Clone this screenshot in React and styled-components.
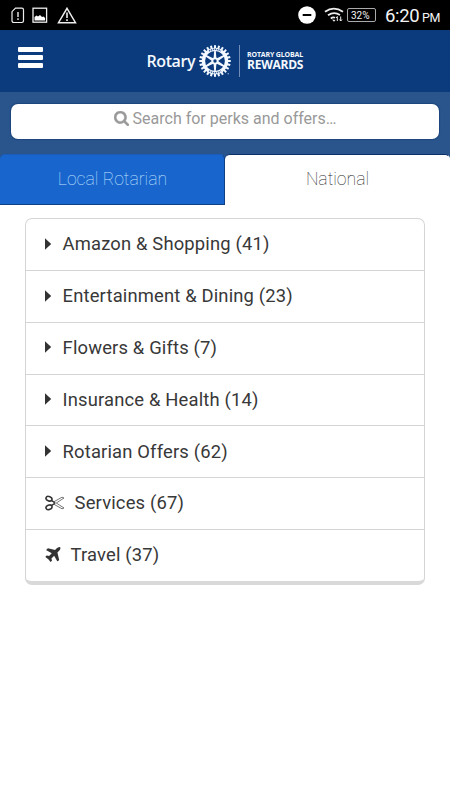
import styled, { createGlobalStyle } from 'styled-components';

const categories = [
  { name: 'Amazon & Shopping', count: 41, icon: 'caret' },
  { name: 'Entertainment & Dining', count: 23, icon: 'caret' },
  { name: 'Flowers & Gifts', count: 7, icon: 'caret' },
  { name: 'Insurance & Health', count: 14, icon: 'caret' },
  { name: 'Rotarian Offers', count: 62, icon: 'caret' },
  { name: 'Services', count: 67, icon: 'scissors' },
  { name: 'Travel', count: 37, icon: 'plane' },
];

const SimIcon = () => (
  <svg width="14" height="17" viewBox="0 0 14 17" fill="none" stroke="#eee">
    <path
      d="M4.5 1.2h6.3a1.7 1.7 0 0 1 1.7 1.7v10.9a1.7 1.7 0 0 1-1.7 1.7H2.7A1.7 1.7 0 0 1 1 13.8V4.7z"
      strokeWidth="1.2"
    />
    <path d="M7 5v5M7 11.3v1.7" strokeWidth="1.4" />
  </svg>
);

const PictureIcon = () => (
  <svg width="16" height="17" viewBox="0 0 16 17">
    <rect x="1" y="1.2" width="13.6" height="14" fill="none" stroke="#eee" strokeWidth="1.3" />
    <path d="M2.5 13.5V10l2-1.5 1.5 1 2-1.5 2 2 1.5-.5 1.6 1.5v2.5z" fill="#fff" />
  </svg>
);

const WarningIcon = () => (
  <svg width="20" height="17" viewBox="0 0 20 17" fill="none" stroke="#eee">
    <path d="M10 1.3 18.5 15.7h-17z" strokeWidth="1.5" />
    <path d="M10 5.5V11M10 12.3V14" strokeWidth="1.6" />
  </svg>
);

const DoNotDisturbIcon = () => (
  <svg width="18" height="18" viewBox="0 0 18 18">
    <circle cx="9" cy="9" r="8.8" fill="#fff" />
    <rect x="4.7" y="8" width="8.6" height="2" fill="#000" />
  </svg>
);

const WifiIcon = () => (
  <svg width="20" height="16" viewBox="0 0 20 16" fill="none" stroke="#eee">
    <path d="M1 4.8Q9.8-1.7 19 4.8" strokeWidth="1.8" />
    <path d="M4 8.3q6-4.2 12-.3" strokeWidth="1.8" />
    <path d="M6.8 11.5q2.2-1.7 4.2-.7" strokeWidth="1.8" />
    <path d="m8 12.5 2 2.3 1.5-1.8z" fill="#eee" stroke="none" />
    <path d="M13.3 14V9.5m-1.3 1.5 1.3-1.5M16.7 9.5V14m-1.3-1.5 1.3 1.5 1.3-1.5" />
  </svg>
);

const SearchIcon = () => (
  <svg width="15" height="15" viewBox="64 128 1664 1664" fill="#999" stroke="#999" strokeWidth="40">
    <path d="M1216 832q0-185-131.5-316.5t-316.5-131.5-316.5 131.5-131.5 316.5 131.5 316.5 316.5 131.5 316.5-131.5 131.5-316.5zm512 832q0 52-38 90t-90 38q-54 0-90-38l-343-342q-179 124-399 124-143 0-273.5-55.5t-225-150-150-225-55.5-273.5 55.5-273.5 150-225 225-150 273.5-55.5 273.5 55.5 225 150 150 225 55.5 273.5q0 220-124 399l343 343q37 37 37 90z" />
  </svg>
);

const CaretIcon = () => (
  <svg width="7" height="12" viewBox="0 0 7 12">
    <path d="M0 .3 6.2 6 0 11.7z" fill="#333" />
  </svg>
);

const ScissorsIcon = () => (
  <svg width="20" height="16" viewBox="0 0 20 16" fill="none" stroke="#333">
    <ellipse cx="4" cy="3.7" rx="3.1" ry="2.2" strokeWidth="1.6" transform="rotate(22 4 3.7)" />
    <ellipse cx="4" cy="12.3" rx="3.1" ry="2.2" strokeWidth="1.6" transform="rotate(-22 4 12.3)" />
    <path d="m6.7 5.7 3.5 2.1M6.7 10.3l3.5-2.1" strokeWidth="1.4" />
    <path
      d="M9 6.7 17 2.2l2 .8-7.7 5 7.7 5-2 .8L9 9.3M9 6.7v1.8"
      stroke="#555"
      strokeWidth=".8"
      strokeLinejoin="round"
    />
  </svg>
);

const PlaneIcon = () => (
  <svg width="16" height="15" viewBox="190 128 1410 1412" fill="#333">
    <path d="M1568 160q44 52 12 148t-108 172l-161 161 160 696q5 19-12 33l-128 96q-7 6-19 6-4 0-7-1-15-3-21-16l-279-508-259 259 53 194q5 17-8 31l-96 96q-9 9-23 9h-2q-15-2-24-13l-189-252-252-189q-11-7-13-23-1-13 9-25l96-97q9-9 23-9 6 0 8 1l194 53 259-259-508-279q-14-8-17-24-2-16 9-27l128-128q14-13 30-8l665 159 160-160q76-76 172-108t148 12z" />
  </svg>
);

const rowIcons = {
  caret: <CaretIcon />,
  scissors: <ScissorsIcon />,
  plane: <PlaneIcon />,
};

const RotaryWheel = () => {
  const teeth = Array.from({ length: 24 }, (_, i) => i * 15);
  const spokes = [0, 60, 120, 180, 240, 300];

  return (
    <svg width="34" height="34" viewBox="-17 -17 34 34" fill="#f4f8ff">
      {teeth.map((deg) => (
        <rect key={deg} x="-1" y="-15.8" width="2" height="3.2" transform={`rotate(${deg})`} />
      ))}
      <circle r="11.6" fill="none" stroke="#f4f8ff" strokeWidth="3.4" />
      <path
        d="M-6-10Q0-13.4 6-10M-6 10Q0 13.4 6 10"
        fill="none"
        stroke="#3f659c"
        strokeWidth="1.5"
        strokeDasharray="1.3 .7"
      />
      {spokes.map((deg) => (
        <path key={deg} d="M-1.6 0-.8-10.5H.8L1.6 0z" transform={`rotate(${deg})`} />
      ))}
      <circle r="3.4" />
      <circle r="1.7" fill="#0b3b7c" />
      <circle cx="13.2" cy="12.7" r=".7" fill="#9db4d6" />
    </svg>
  );
};

const App = () => {
  return (
    <>
      <GlobalStyle />
      <Screen>
        <StatusBar>
          <StatusLeft>
            <SimIcon />
            <PictureIcon />
            <WarningIcon />
          </StatusLeft>
          <StatusRight>
            <DoNotDisturbIcon />
            <WifiIcon />
            <Battery>32%</Battery>
            <Clock>
              6:20 <small>PM</small>
            </Clock>
          </StatusRight>
        </StatusBar>
        <Header>
          <MenuButton aria-label="Menu">
            <span />
            <span />
            <span />
          </MenuButton>
          <Logo>
            <LogoName>Rotary</LogoName>
            <RotaryWheel />
            <LogoTagline>
              <small>ROTARY GLOBAL</small>
              <strong>REWARDS</strong>
            </LogoTagline>
          </Logo>
        </Header>
        <SearchArea>
          <SearchBox>
            <SearchIcon />
            <SearchText>Search for perks and offers…</SearchText>
          </SearchBox>
        </SearchArea>
        <Tabs>
          <Tab>Local Rotarian</Tab>
          <Tab $active>National</Tab>
        </Tabs>
        <CategoryList>
          {categories.map((v) => (
            <CategoryRow key={v.name} $icon={v.icon}>
              {rowIcons[v.icon]}
              <span>
                {v.name} ({v.count})
              </span>
            </CategoryRow>
          ))}
        </CategoryList>
      </Screen>
    </>
  );
};
export default App;

const GlobalStyle = createGlobalStyle`
  * {
    box-sizing: border-box;
  }

  body {
    margin: 0;
    background: #fff;
    font-family: Roboto, sans-serif;
  }

  svg {
    display: block;
    flex-shrink: 0;
  }
`;

const Screen = styled.div`
  width: 450px;
  height: 800px;
  background: #fff;
  overflow: hidden;
`;

const StatusBar = styled.div`
  height: 30px;
  padding: 0 10px 0 11px;
  background: #000;
  color: #f4f4f4;
  display: flex;
  align-items: center;
  justify-content: space-between;
`;

const StatusLeft = styled.div`
  display: flex;
  gap: 7px;

  svg:last-child {
    margin-left: 2px;
  }
`;

const StatusRight = styled.div`
  display: flex;
  align-items: center;

  svg + svg {
    margin-left: 8px;
  }
`;

const Battery = styled.span`
  margin-left: 3px;
  padding-left: 3px;
  width: 29px;
  height: 14px;
  border: 1px solid #aaa;
  border-radius: 2px;
  font-size: 10px;
  line-height: 13px;
`;

const Clock = styled.span`
  margin-left: 9px;
  width: 55px;
  font-size: 18.5px;
  line-height: 28px;
  padding-top: 3px;
  white-space: nowrap;
  letter-spacing: -0.35px;

  small {
    margin-left: -1.5px;
    font-size: 12.5px;
  }
`;

const Header = styled.header`
  height: 62px;
  padding-left: 18px;
  background: #0b3b7c;
  display: flex;
  align-items: flex-start;
`;

const MenuButton = styled.button`
  margin-top: 17px;
  padding: 0;
  width: 25px;
  border: 0;
  background: none;
  display: grid;
  gap: 3px;

  span {
    height: 5px;
    border-radius: 1px;
    background: #fff;
  }
`;

const Logo = styled.div`
  margin: 14px 0 0 103.5px;
  display: flex;
  align-items: center;
  color: #f4f8ff;
  font-family: 'Open Sans', sans-serif;
`;

const LogoName = styled.span`
  width: 51.5px;
  font-size: 16px;
  line-height: 22px;
  padding-bottom: 1px;
  font-weight: 600;
  letter-spacing: -0.4px;
`;

const LogoTagline = styled.div`
  margin-left: 6.5px;
  padding: 6px 0 0 7.5px;
  height: 32px;
  border-left: 1px solid #6f8db8;
  display: flex;
  flex-direction: column;
  white-space: nowrap;

  small {
    font-size: 7px;
    line-height: 7px;
    font-weight: 700;
    letter-spacing: -0.15px;
  }

  strong {
    font-size: 12px;
    line-height: 13px;
    font-weight: 700;
    letter-spacing: -0.25px;
  }
`;

const SearchArea = styled.div`
  height: 62px;
  padding: 12px 11px 0;
  background: #2a558c;
`;

const SearchBox = styled.div`
  height: 35px;
  padding-bottom: 6px;
  border-radius: 7px;
  background: #fff;
  box-shadow: 0 0 1px 1px #1b457c;
  display: flex;
  align-items: center;
  justify-content: center;
  gap: 4px;
`;

const SearchText = styled.span`
  font-size: 16px;
  color: #999;
`;

const Tabs = styled.nav`
  height: 51px;
  display: grid;
  grid-template-columns: 1fr 1fr;
  background: linear-gradient(#2a558c 8px, #fff 8px);
`;

const Tab = styled.a`
  padding: 0 0 2px 1px;
  border-radius: 5px 5px 0 0;
  border-top: 1px solid ${(props) => (props.$active ? '#0a2f66' : '#1a5cb8')};
  border-right: 1px solid ${(props) => (props.$active ? '#fff' : '#0f3f86')};
  border-bottom: 1px solid ${(props) => (props.$active ? '#fff' : '#0f3f86')};
  background: ${(props) => (props.$active ? '#fff' : '#1866cd')};
  color: ${(props) => (props.$active ? '#222' : '#c4e2ff')};
  font-size: 17.6px;
  font-weight: 100;
  display: flex;
  align-items: center;
  justify-content: center;
`;

const CategoryList = styled.ul`
  margin: 13px 25px 0;
  padding: 0;
  height: 367px;
  border: 1px solid #d5d5d5;
  border-bottom: 4px solid #d9d9d9;
  border-radius: 7px;
  list-style: none;
  display: grid;
  grid-template-rows: 51px repeat(6, 1fr);
`;

const CategoryRow = styled.li`
  padding: 0 0 1.6px 18.6px;
  display: flex;
  align-items: center;
  gap: ${(props) => (props.$icon === 'caret' ? '11px' : '10px')};
  font-size: 18.4px;
  letter-spacing: 0.16px;
  color: #383838;

  & + & {
    border-top: 1px solid #d5d5d5;
  }
`;
